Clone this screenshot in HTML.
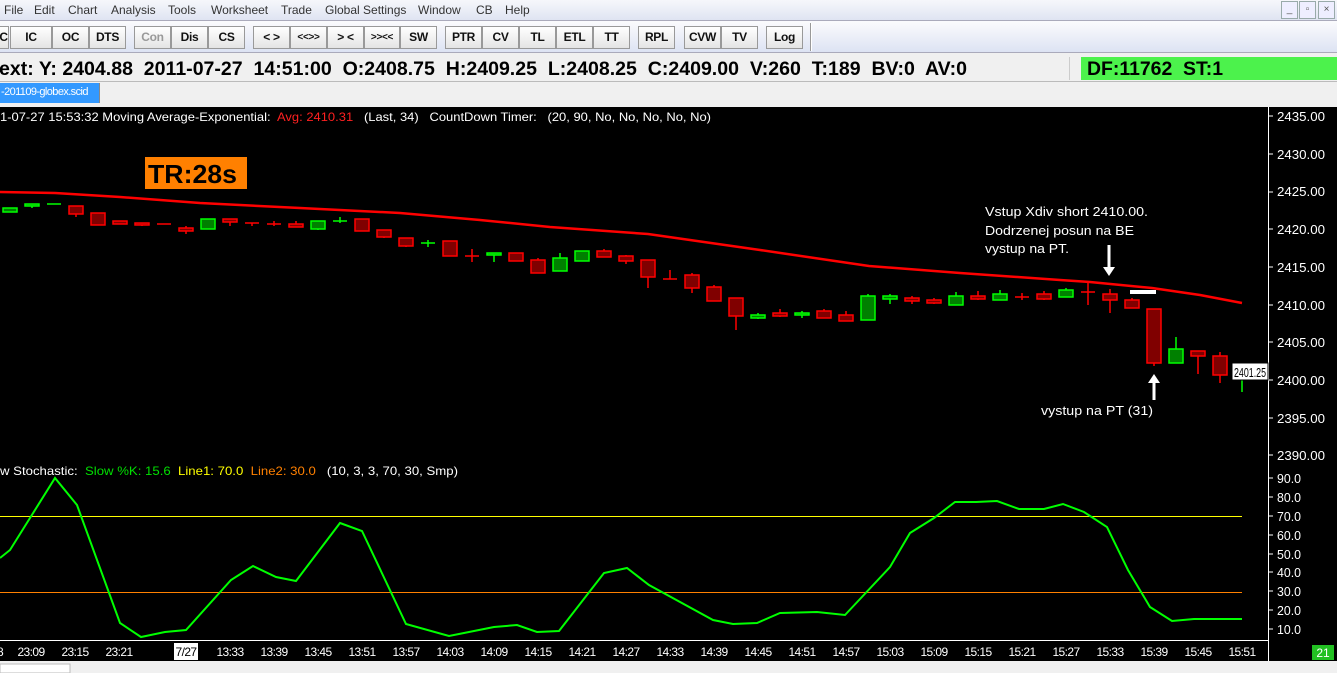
<!DOCTYPE html>
<html><head><meta charset="utf-8"><style>
*{margin:0;padding:0;box-sizing:border-box}
body{width:1337px;height:673px;overflow:hidden;background:#f0f0f0;font-family:"Liberation Sans",Arial,sans-serif;position:relative}
.menu{position:absolute;left:0;top:0;width:1337px;height:20px;background:linear-gradient(#f6f7fb,#dfe4f2);font-size:12px;color:#333}
.menu span{position:absolute;top:3px}
.wb{position:absolute;top:1px;width:17px;height:18px;border:1px solid #9aa;background:#eef;font-size:10px;text-align:center;line-height:16px;color:#555}
.tb{position:absolute;left:0;top:20px;width:1337px;height:33px;background:linear-gradient(#fbfbfd,#dde3f3);border-top:1px solid #aab;border-bottom:1px solid #aab}
.b{position:absolute;top:5px;height:23px;border:1px solid #999;background:linear-gradient(#fff,#e4e4e4);font-size:12px;font-weight:bold;text-align:center;line-height:21px;color:#111;letter-spacing:-0.3px}
.info{position:absolute;left:0;top:55px;width:1337px;height:27px;border-bottom:1px solid #bbb;font-size:19px;font-weight:bold;white-space:pre;color:#000}
.tab{position:absolute;left:0;top:83px;width:100px;height:20px;background:#3399ff;color:#fff;font-size:11px;line-height:19px;padding-left:1px;border-right:1px solid #888;white-space:nowrap;overflow:hidden;letter-spacing:-0.6px}
svg{position:absolute;left:0;top:0}
</style></head><body>
<div class="menu">
<span style="left:4px">File</span><span style="left:34px">Edit</span><span style="left:68px">Chart</span><span style="left:111px">Analysis</span><span style="left:168px">Tools</span><span style="left:211px">Worksheet</span><span style="left:281px">Trade</span><span style="left:325px">Global Settings</span><span style="left:418px">Window</span><span style="left:476px">CB</span><span style="left:505px">Help</span>
<div class="wb" style="left:1281px">_</div><div class="wb" style="left:1299px">▫</div><div class="wb" style="left:1318px">×</div>
</div>
<div class="tb">
<div class="b" style="left:-2px;width:11px">C</div>
<div class="b" style="left:10px;width:42px">IC</div>
<div class="b" style="left:52px;width:37px">OC</div>
<div class="b" style="left:89px;width:37px">DTS</div>
<div class="b" style="left:134px;width:37px;color:#999">Con</div>
<div class="b" style="left:171px;width:37px">Dis</div>
<div class="b" style="left:208px;width:37px">CS</div>
<div class="b" style="left:253px;width:37px">&lt; &gt;</div>
<div class="b" style="left:290px;width:37px;font-size:10px">&lt;&lt;&gt;&gt;</div>
<div class="b" style="left:327px;width:37px">&gt; &lt;</div>
<div class="b" style="left:364px;width:36px;font-size:10px">&gt;&gt;&lt;&lt;</div>
<div class="b" style="left:400px;width:37px">SW</div>
<div class="b" style="left:445px;width:37px">PTR</div>
<div class="b" style="left:482px;width:37px">CV</div>
<div class="b" style="left:519px;width:37px">TL</div>
<div class="b" style="left:556px;width:37px">ETL</div>
<div class="b" style="left:593px;width:37px">TT</div>
<div class="b" style="left:638px;width:37px">RPL</div>
<div class="b" style="left:684px;width:37px">CVW</div>
<div class="b" style="left:721px;width:37px">TV</div>
<div class="b" style="left:766px;width:37px">Log</div>
<div style="position:absolute;left:810px;top:2px;width:2px;height:28px;border-left:1px solid #999;border-right:1px solid #fff"></div>
</div>
<div class="info">
<div style="position:absolute;left:1069px;top:2px;width:1px;height:23px;background:#ccc"></div>
<div style="position:absolute;left:1081px;top:2px;width:256px;height:23px;background:#4cf24c"></div></div>
<div class="tab">-201109-globex.scid</div>
<svg width="1337" height="673" xmlns="http://www.w3.org/2000/svg" font-family="Liberation Sans, sans-serif">
<g font-size="19" font-weight="bold" fill="#000">
<text x="-1" y="75" textLength="968" lengthAdjust="spacingAndGlyphs" xml:space="preserve">ext: Y: 2404.88  2011-07-27  14:51:00  O:2408.75  H:2409.25  L:2408.25  C:2409.00  V:260  T:189  BV:0  AV:0</text>
<text x="1087" y="75" textLength="136" lengthAdjust="spacingAndGlyphs" xml:space="preserve">DF:11762  ST:1</text>
</g>
<rect x="0" y="107" width="1337" height="554" fill="#000"/>
<line x1="1268.5" y1="107" x2="1268.5" y2="661" stroke="#fff"/>
<line x1="0" y1="640.5" x2="1268" y2="640.5" stroke="#fff"/>
<g font-size="12" fill="#fff">
<text x="0" y="121" textLength="711" lengthAdjust="spacingAndGlyphs" xml:space="preserve">1-07-27 15:53:32 Moving Average-Exponential:  <tspan fill="#ff2020">Avg: 2410.31</tspan>   (Last, 34)   CountDown Timer:   (20, 90, No, No, No, No, No)</text>
<text x="0" y="475" textLength="458" lengthAdjust="spacingAndGlyphs" xml:space="preserve">w Stochastic:  <tspan fill="#00e000">Slow %K: 15.6</tspan>  <tspan fill="#ffff00">Line1: 70.0</tspan>  <tspan fill="#ff8000">Line2: 30.0</tspan>   (10, 3, 3, 70, 30, Smp)</text>
</g>
<rect x="145" y="157" width="102" height="32" fill="#ff8000"/>
<text x="148" y="183" font-size="26" font-weight="bold" fill="#000" textLength="89" lengthAdjust="spacingAndGlyphs">TR:28s</text>
<polyline fill="none" stroke="#ff0000" stroke-width="2.5" points="0,192 55,193 120,197 200,203 300,208 400,213 480,220 550,227 648,234 760,250 869,266 960,273 1060,280 1090,282 1152,288 1200,295 1242,303"/>
<g stroke="#ff0000" fill="#800000" stroke-width="1.5">
<line x1="76" y1="206" x2="76" y2="217"/><rect x="69" y="206" width="14" height="8"/>
<rect x="91" y="213" width="14" height="12"/>
<rect x="113" y="221" width="14" height="3"/>
<line x1="142" y1="223" x2="142" y2="226"/><rect x="135" y="223" width="14" height="2"/>
<line x1="157" y1="224" x2="171" y2="224"/>
<line x1="186" y1="226" x2="186" y2="234"/><rect x="179" y="228" width="14" height="3"/>
<line x1="230" y1="219" x2="230" y2="226"/><rect x="223" y="219" width="14" height="3"/>
<line x1="252" y1="223" x2="252" y2="226"/><line x1="245" y1="223" x2="259" y2="223"/>
<line x1="274" y1="221" x2="274" y2="226"/><line x1="267" y1="224" x2="281" y2="224"/>
<line x1="296" y1="221" x2="296" y2="227"/><rect x="289" y="224" width="14" height="3"/>
<rect x="355" y="219" width="14" height="12"/>
<line x1="384" y1="230" x2="384" y2="238"/><rect x="377" y="230" width="14" height="7"/>
<line x1="406" y1="238" x2="406" y2="247"/><rect x="399" y="238" width="14" height="8"/>
<rect x="443" y="241" width="14" height="15"/>
<line x1="472" y1="249" x2="472" y2="262"/><line x1="465" y1="256" x2="479" y2="256"/>
<rect x="509" y="253" width="14" height="8"/>
<line x1="538" y1="258" x2="538" y2="273"/><rect x="531" y="260" width="14" height="13"/>
<line x1="604" y1="249" x2="604" y2="257"/><rect x="597" y="251" width="14" height="6"/>
<line x1="626" y1="255" x2="626" y2="264"/><rect x="619" y="256" width="14" height="5"/>
<line x1="648" y1="260" x2="648" y2="288"/><rect x="641" y="260" width="14" height="17"/>
<line x1="670" y1="270" x2="670" y2="279"/><line x1="663" y1="279" x2="677" y2="279"/>
<line x1="692" y1="273" x2="692" y2="293"/><rect x="685" y="275" width="14" height="13"/>
<line x1="714" y1="285" x2="714" y2="301"/><rect x="707" y="287" width="14" height="14"/>
<line x1="736" y1="298" x2="736" y2="330"/><rect x="729" y="298" width="14" height="18"/>
<line x1="780" y1="309" x2="780" y2="317"/><rect x="773" y="313" width="14" height="3"/>
<line x1="824" y1="309" x2="824" y2="318"/><rect x="817" y="311" width="14" height="7"/>
<line x1="846" y1="311" x2="846" y2="321"/><rect x="839" y="315" width="14" height="6"/>
<line x1="912" y1="296" x2="912" y2="304"/><rect x="905" y="298" width="14" height="3"/>
<line x1="934" y1="298" x2="934" y2="304"/><rect x="927" y="300" width="14" height="3"/>
<line x1="978" y1="291" x2="978" y2="300"/><rect x="971" y="296" width="14" height="3"/>
<line x1="1022" y1="293" x2="1022" y2="300"/><line x1="1015" y1="297" x2="1029" y2="297"/>
<line x1="1044" y1="291" x2="1044" y2="300"/><rect x="1037" y="294" width="14" height="5"/>
<line x1="1088" y1="283" x2="1088" y2="305"/><line x1="1081" y1="292" x2="1095" y2="292"/>
<line x1="1110" y1="289" x2="1110" y2="313"/><rect x="1103" y="294" width="14" height="6"/>
<line x1="1132" y1="298" x2="1132" y2="308"/><rect x="1125" y="300" width="14" height="8"/>
<line x1="1154" y1="309" x2="1154" y2="366"/><rect x="1147" y="309" width="14" height="54"/>
<line x1="1198" y1="351" x2="1198" y2="374"/><rect x="1191" y="351" width="14" height="5"/>
<line x1="1220" y1="352" x2="1220" y2="383"/><rect x="1213" y="356" width="14" height="19"/>
</g>
<g stroke="#00ff00" fill="#008000" stroke-width="1.5">
<rect x="3" y="208" width="14" height="4"/>
<line x1="32" y1="204" x2="32" y2="208"/><rect x="25" y="204" width="14" height="2"/>
<line x1="47" y1="204" x2="61" y2="204"/>
<rect x="201" y="219" width="14" height="10"/>
<line x1="318" y1="221" x2="318" y2="230"/><rect x="311" y="221" width="14" height="8"/>
<line x1="340" y1="217" x2="340" y2="223"/><line x1="333" y1="221" x2="347" y2="221"/>
<line x1="428" y1="240" x2="428" y2="247"/><line x1="421" y1="243" x2="435" y2="243"/>
<line x1="494" y1="253" x2="494" y2="262"/><rect x="487" y="253" width="14" height="2"/>
<line x1="560" y1="253" x2="560" y2="271"/><rect x="553" y="258" width="14" height="13"/>
<rect x="575" y="251" width="14" height="10"/>
<line x1="758" y1="313" x2="758" y2="319"/><rect x="751" y="315" width="14" height="3"/>
<line x1="802" y1="311" x2="802" y2="318"/><rect x="795" y="313" width="14" height="2"/>
<line x1="868" y1="294" x2="868" y2="320"/><rect x="861" y="296" width="14" height="24"/>
<line x1="890" y1="294" x2="890" y2="304"/><rect x="883" y="296" width="14" height="3"/>
<line x1="956" y1="292" x2="956" y2="305"/><rect x="949" y="296" width="14" height="9"/>
<line x1="1000" y1="290" x2="1000" y2="300"/><rect x="993" y="294" width="14" height="6"/>
<line x1="1066" y1="288" x2="1066" y2="297"/><rect x="1059" y="290" width="14" height="7"/>
<line x1="1176" y1="337" x2="1176" y2="363"/><rect x="1169" y="349" width="14" height="14"/>
<line x1="1242" y1="368" x2="1242" y2="392"/><rect x="1235" y="371" width="14" height="5"/>
</g>
<g fill="#fff" font-size="13">
<text x="985" y="216" textLength="163" lengthAdjust="spacingAndGlyphs">Vstup Xdiv short 2410.00.</text>
<text x="985" y="235" textLength="149" lengthAdjust="spacingAndGlyphs">Dodrzenej posun na BE</text>
<text x="985" y="253" textLength="84" lengthAdjust="spacingAndGlyphs">vystup na PT.</text>
<text x="1041" y="415" textLength="112" lengthAdjust="spacingAndGlyphs">vystup na PT (31)</text>
</g>
<line x1="1109" y1="245" x2="1109" y2="270" stroke="#fff" stroke-width="3"/><polygon points="1103,267 1115,267 1109,276" fill="#fff"/>
<line x1="1154" y1="381" x2="1154" y2="400" stroke="#fff" stroke-width="3"/><polygon points="1148,383 1160,383 1154,374" fill="#fff"/>
<rect x="1130" y="290" width="26" height="4" fill="#fff"/>
<line x1="0" y1="516.5" x2="1242" y2="516.5" stroke="#ffff00"/>
<line x1="0" y1="592.5" x2="1242" y2="592.5" stroke="#ff8000"/>
<polyline fill="none" stroke="#00ff00" stroke-width="2" points="0,558 10,550 55,478 77,505 120,623 141,637 165,632 186,630 231,580 253,566 276,577 296,581 340,523 362,531 406,624 449,636 494,627 517,625 537,632 559,631 604,573 627,568 649,585 713,620 733,624 757,623 780,613 817,612 845,615 890,567 910,533 934,518 955,502 976,502 997,501 1019,509 1044,509 1063,504 1084,512 1107,527 1128,570 1150,607 1172,621 1194,619 1242,619"/>
<g fill="#fff" font-size="13">
<text x="1277" y="121" textLength="48" lengthAdjust="spacingAndGlyphs">2435.00</text><text x="1277" y="159" textLength="48" lengthAdjust="spacingAndGlyphs">2430.00</text><text x="1277" y="196" textLength="48" lengthAdjust="spacingAndGlyphs">2425.00</text><text x="1277" y="234" textLength="48" lengthAdjust="spacingAndGlyphs">2420.00</text><text x="1277" y="272" textLength="48" lengthAdjust="spacingAndGlyphs">2415.00</text><text x="1277" y="310" textLength="48" lengthAdjust="spacingAndGlyphs">2410.00</text><text x="1277" y="347" textLength="48" lengthAdjust="spacingAndGlyphs">2405.00</text><text x="1277" y="385" textLength="48" lengthAdjust="spacingAndGlyphs">2400.00</text><text x="1277" y="423" textLength="48" lengthAdjust="spacingAndGlyphs">2395.00</text><text x="1277" y="460" textLength="48" lengthAdjust="spacingAndGlyphs">2390.00</text>
<text x="1277" y="483" textLength="24" lengthAdjust="spacingAndGlyphs">90.0</text><text x="1277" y="502" textLength="24" lengthAdjust="spacingAndGlyphs">80.0</text><text x="1277" y="521" textLength="24" lengthAdjust="spacingAndGlyphs">70.0</text><text x="1277" y="540" textLength="24" lengthAdjust="spacingAndGlyphs">60.0</text><text x="1277" y="559" textLength="24" lengthAdjust="spacingAndGlyphs">50.0</text><text x="1277" y="577" textLength="24" lengthAdjust="spacingAndGlyphs">40.0</text><text x="1277" y="596" textLength="24" lengthAdjust="spacingAndGlyphs">30.0</text><text x="1277" y="615" textLength="24" lengthAdjust="spacingAndGlyphs">20.0</text><text x="1277" y="634" textLength="24" lengthAdjust="spacingAndGlyphs">10.0</text>
</g>
<g stroke="#fff"><line x1="1268" y1="116" x2="1273" y2="116"/><line x1="1268" y1="154" x2="1273" y2="154"/><line x1="1268" y1="192" x2="1273" y2="192"/><line x1="1268" y1="229" x2="1273" y2="229"/><line x1="1268" y1="267" x2="1273" y2="267"/><line x1="1268" y1="305" x2="1273" y2="305"/><line x1="1268" y1="342" x2="1273" y2="342"/><line x1="1268" y1="380" x2="1273" y2="380"/><line x1="1268" y1="418" x2="1273" y2="418"/><line x1="1268" y1="455" x2="1273" y2="455"/>
<line x1="1268" y1="478" x2="1273" y2="478"/><line x1="1268" y1="497" x2="1273" y2="497"/><line x1="1268" y1="516" x2="1273" y2="516"/><line x1="1268" y1="535" x2="1273" y2="535"/><line x1="1268" y1="554" x2="1273" y2="554"/><line x1="1268" y1="572" x2="1273" y2="572"/><line x1="1268" y1="591" x2="1273" y2="591"/><line x1="1268" y1="610" x2="1273" y2="610"/><line x1="1268" y1="629" x2="1273" y2="629"/></g>
<rect x="1232" y="363" width="36" height="17" fill="#fff" stroke="#000"/><text x="1234" y="377" font-size="13" fill="#000" textLength="32" lengthAdjust="spacingAndGlyphs">2401.25</text>
<g fill="#fff" font-size="12" text-anchor="middle" letter-spacing="-0.6">
<text x="0" y="656">8</text><text x="31" y="656">23:09</text><text x="75" y="656">23:15</text><text x="119" y="656">23:21</text>
<text x="230" y="656">13:33</text><text x="274" y="656">13:39</text><text x="318" y="656">13:45</text><text x="362" y="656">13:51</text><text x="406" y="656">13:57</text><text x="450" y="656">14:03</text><text x="494" y="656">14:09</text><text x="538" y="656">14:15</text><text x="582" y="656">14:21</text><text x="626" y="656">14:27</text><text x="670" y="656">14:33</text><text x="714" y="656">14:39</text><text x="758" y="656">14:45</text><text x="802" y="656">14:51</text><text x="846" y="656">14:57</text><text x="890" y="656">15:03</text><text x="934" y="656">15:09</text><text x="978" y="656">15:15</text><text x="1022" y="656">15:21</text><text x="1066" y="656">15:27</text><text x="1110" y="656">15:33</text><text x="1154" y="656">15:39</text><text x="1198" y="656">15:45</text><text x="1242" y="656">15:51</text>
</g>
<rect x="174" y="643" width="24" height="17" fill="#fff"/><text x="186" y="656" font-size="12" fill="#000" text-anchor="middle" letter-spacing="-0.6">7/27</text>
<rect x="1312" y="645" width="22" height="15" fill="#22c022"/><text x="1323" y="657" font-size="12" fill="#fff" text-anchor="middle">21</text>
<rect x="0" y="661" width="1337" height="12" fill="#f0f0f0"/>
<rect x="0" y="664" width="70" height="9" fill="#fff" stroke="#bbb"/>
</svg>
</body></html>
